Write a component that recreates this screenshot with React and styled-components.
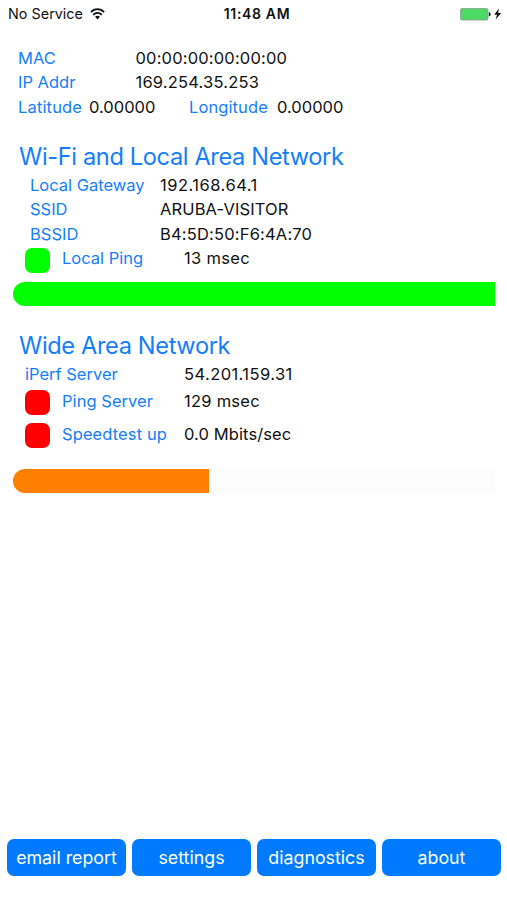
import styled, { createGlobalStyle } from 'styled-components';

const GlobalStyle = createGlobalStyle`
  *{
    box-sizing:border-box;
  }
  body{
    margin:0;
    background-color:#fff;
    font-family:Inter, "Liberation Sans", sans-serif;
  }
`;

const Screen = styled.div`
  display:flex;
  flex-direction:column;
  width:507px;
  height:900px;
  overflow:hidden;
  color:#111;
`;

const StatusBar = styled.header`
  display:grid;
  grid-template-columns:1fr auto 1fr;
  align-items:center;
  height:27px;
  padding:0 5px 0 8px;
  font-size:14.4px;
`;

const Carrier = styled.div`
  display:flex;
  align-items:center;
  gap:7px;
`;

const Clock = styled.div`
  font-size:14px;
  font-weight:600;
  letter-spacing:.65px;
  padding-left:4px;
`;

const Power = styled.div`
  display:flex;
  justify-content:flex-end;
  align-items:center;
`;

const Section = styled.section`
  padding-top:${props=>props.$top}px;
`;

const Title = styled.h2`
  margin:0;
  padding:${props=>props.$drop || 1}px 0 0 19px;
  height:34px;
  line-height:34px;
  font-size:23.6px;
  font-weight:400;
  letter-spacing:-.36px;
  color:#147efb;
  white-space:nowrap;
`;

const Row = styled.div`
  display:flex;
  align-items:center;
  height:${props=>props.$height || 24.5}px;
  padding-left:${props=>props.$indent}px;
  font-size:16.5px;
  white-space:nowrap;
`;

const Label = styled.span`
  flex:none;
  width:${props=>props.$width}px;
  letter-spacing:${props=>props.$spacing || 0}px;
  color:#147efb;
`;

const Value = styled.span`
  flex:none;
  width:${props=>props.$width ? `${props.$width}px` : 'auto'};
  letter-spacing:${props=>props.$spacing || 0}px;
`;

const Light = styled.span`
  flex:none;
  width:25px;
  height:25px;
  margin:4px 12px 0 0;
  border-radius:7px;
  background-color:${props=>props.$color};
`;

const Track = styled.div`
  width:482px;
  height:24px;
  margin:${props=>props.$top}px 0 0 13px;
  border-radius:12px 0 0 12px;
  background-color:#fcfcfc;
  overflow:hidden;
`;

const Fill = styled.div`
  height:100%;
  background-color:${props=>props.$color};
`;

const Toolbar = styled.nav`
  display:grid;
  grid-template-columns:repeat(4, 1fr);
  gap:6px;
  margin-top:auto;
  padding:0 6px 24px 7px;
`;

const Button = styled.button`
  height:37px;
  padding:0;
  border:0;
  border-radius:7px;
  background-color:#007aff;
  color:#fff;
  font-family:inherit;
  font-size:17.8px;
  white-space:nowrap;
`;

const WifiIcon = () => (
  <svg width="15" height="12" viewBox="0 0 16 12" preserveAspectRatio="none" fill="none" stroke="#111" strokeWidth="1.8">
    <path d="M1 4.2C5 .2 11 .2 15 4.2" />
    <path d="M3.4 6.8C6 4.3 10 4.3 12.6 6.8" />
    <path d="M5.4 8.7C6.8 7.3 9.2 7.3 10.6 8.7L8 11.4Z" fill="#111" stroke="none" />
  </svg>
);

const BatteryIcon = () => (
  <svg width="42" height="14" viewBox="0 0 42 14">
    <rect x=".5" y="1.5" width="27.5" height="11.5" rx="1.5" fill="#4cd964" stroke="#8d9a8f" strokeWidth=".8" />
    <path d="M28.8 5.2h.5a1.2 1.8 0 0 1 0 4h-.5z" fill="#222" />
    <path d="M39 1.4L34.2 7.8H37L35.6 12.4L41.2 5.9H38.1Z" fill="#111" />
  </svg>
);

const Meter = ({top, color, percent}) => (
  <Track $top={top}>
    <Fill $color={color} style={{width:`${percent}%`}}/>
  </Track>
);

const device = [
  {label:'MAC', value:'00:00:00:00:00:00', spacing:.17},
  {label:'IP Addr', value:'169.254.35.253', spacing:.2},
];

const local = [
  {label:'Local Gateway', value:'192.168.64.1', spacing:.5},
  {label:'SSID', value:'ARUBA-VISITOR', spacing:.12},
  {label:'BSSID', value:'B4:5D:50:F6:4A:70', spacing:.18},
];

const actions = ['email report', 'settings', 'diagnostics', 'about'];

export default function App() {
  return (
    <Screen>
      <GlobalStyle/>
      <StatusBar>
        <Carrier>No Service <WifiIcon/></Carrier>
        <Clock>11:48 AM</Clock>
        <Power><BatteryIcon/></Power>
      </StatusBar>
      <Section $top={18.5}>
        {
          device.map(({label,value,spacing})=>(
            <Row key={label} $indent={18}>
              <Label $width={117.5}>{label}</Label>
              <Value $spacing={spacing}>{value}</Value>
            </Row>
          ))
        }
        <Row $indent={18}>
          <Label $width={71} $spacing={.15}>Latitude</Label>
          <Value $width={100}>0.00000</Value>
          <Label $width={88} $spacing={.1}>Longitude</Label>
          <Value>0.00000</Value>
        </Row>
      </Section>
      <Section $top={19.4}>
        <Title $drop={1.6}>Wi-Fi and Local Area Network</Title>
        {
          local.map(({label,value,spacing})=>(
            <Row key={label} $indent={30}>
              <Label $width={130}>{label}</Label>
              <Value $spacing={spacing}>{value}</Value>
            </Row>
          ))
        }
        <Row $indent={25}>
          <Light $color='#00ff00'/>
          <Label $width={122}>Local Ping</Label>
          <Value $spacing={.3}>13 msec</Value>
        </Row>
        <Meter top={11.6} color='#00ff00' percent={100}/>
      </Section>
      <Section $top={22}>
        <Title>Wide Area Network</Title>
        <Row $indent={25}>
          <Label $width={159}>iPerf Server</Label>
          <Value $spacing={.42}>54.201.159.31</Value>
        </Row>
        <Row $indent={25} $height={29}>
          <Light $color='#ff0000'/>
          <Label $width={122} $spacing={.05}>Ping Server</Label>
          <Value $spacing={.25}>129 msec</Value>
        </Row>
        <Row $indent={25} $height={37}>
          <Light $color='#ff0000'/>
          <Label $width={122} $spacing={.1}>Speedtest up</Label>
          <Value $spacing={.1}>0.0 Mbits/sec</Value>
        </Row>
        <Meter top={16.5} color='#ff8000' percent={40.6}/>
      </Section>
      <Toolbar>
        {
          actions.map((name)=>(
            <Button key={name}>{name}</Button>
          ))
        }
      </Toolbar>
    </Screen>
  )
}
